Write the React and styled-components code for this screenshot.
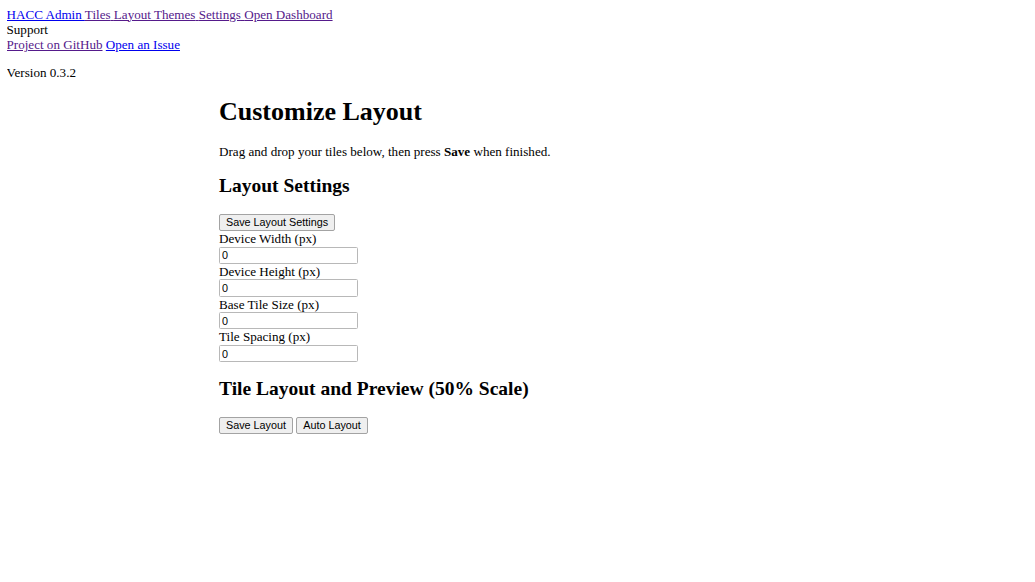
import React from "react";
import styled, { createGlobalStyle } from "styled-components";

const Global = createGlobalStyle`
  html, body { background: #ffffff; }
  body {
    margin: 6.5px;
    font-family: "Liberation Serif", "Times New Roman", serif;
    font-size: 13.1px;
    line-height: 1.15;
    color: #000000;
  }
`;

const TopNav = styled.nav`
  display: block;
`;

const Link = styled.a`
  color: ${(p) => (p.$visited ? "#551A8B" : "#0000EE")};
  text-decoration: underline;
  cursor: pointer;
`;

const LinkGroup = styled.span`
  color: #551a8b;
  text-decoration: underline;
  & > a {
    color: inherit;
    text-decoration: none;
  }
`;

const SupportTitle = styled.div``;

const SupportLinks = styled.div``;

const Version = styled.p`
  margin: 13px 0;
`;

const Main = styled.main`
  margin-left: 212.5px;
`;

const Title = styled.h1`
  font-size: 26px;
  font-weight: bold;
  margin: 17.3px 0;
`;

const Intro = styled.p`
  margin: 13px 0;
`;

const SectionTitle = styled.h2`
  font-size: 19.5px;
  font-weight: bold;
  margin: 16.1px 0;
`;

const Button = styled.button`
  box-sizing: border-box;
  height: 17.2px;
  padding: 0 6px;
  margin: 0;
  font-family: "Liberation Sans", Arial, sans-serif;
  font-size: 10.8px;
  line-height: 15px;
  color: #000;
  background: #efefef;
  border: 1px solid #a3a3a3;
  border-radius: 2px;
  vertical-align: top;
`;

const ButtonRow = styled.div`
  display: flex;
  gap: 3.2px;
`;

const Field = styled.div`
  display: flex;
  flex-direction: column;
  align-items: flex-start;
`;

const FieldLabel = styled.label`
  display: block;
  height: 15.5px;
  line-height: 15.5px;
`;

const NumberInput = styled.input`
  box-sizing: border-box;
  width: 138.5px;
  height: 17.3px;
  margin: 0;
  padding: 0 2px;
  font-family: "Liberation Sans", Arial, sans-serif;
  font-size: 10.8px;
  color: #000;
  background: #fff;
  border: 1px solid #b8b8b8;
  border-radius: 1.5px;
  outline: none;
`;

const fields = [
  "Device Width (px)",
  "Device Height (px)",
  "Base Tile Size (px)",
  "Tile Spacing (px)",
];

export default function App() {
  return (
    <>
      <Global />
      <TopNav>
        <Link href="#">HACC Admin </Link>
        <LinkGroup>
          <a href="#">Tiles</a> <a href="#">Layout</a> <a href="#">Themes</a>{" "}
          <a href="#">Settings</a> <a href="#">Open Dashboard</a>
        </LinkGroup>
      </TopNav>
      <SupportTitle>Support</SupportTitle>
      <SupportLinks>
        <Link href="#" $visited>
          Project on GitHub
        </Link>{" "}
        <Link href="#">Open an Issue</Link>
      </SupportLinks>
      <Version>Version 0.3.2</Version>
      <Main>
        <Title>Customize Layout</Title>
        <Intro>
          Drag and drop your tiles below, then press <b>Save</b> when finished.
        </Intro>
        <SectionTitle>Layout Settings</SectionTitle>
        <Button>Save Layout Settings</Button>
        {fields.map((f) => (
          <Field key={f}>
            <FieldLabel>{f}</FieldLabel>
            <NumberInput type="text" defaultValue="0" />
          </Field>
        ))}
        <SectionTitle>Tile Layout and Preview (50% Scale)</SectionTitle>
        <ButtonRow>
          <Button>Save Layout</Button>
          <Button>Auto Layout</Button>
        </ButtonRow>
      </Main>
    </>
  );
}
